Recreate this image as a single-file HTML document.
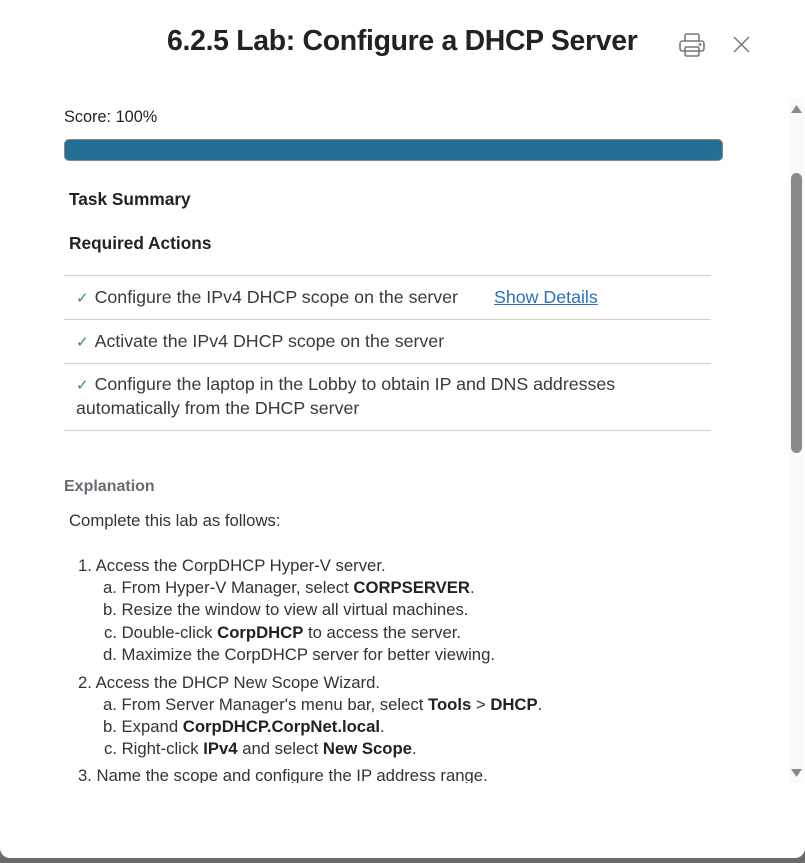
<!DOCTYPE html>
<html><head><meta charset="utf-8"><style>
*{margin:0;padding:0;box-sizing:border-box}
body{width:805px;height:863px;background:#6b6b6b;position:relative;overflow:hidden;font-family:"Liberation Sans",sans-serif;color:#333}
.modal{position:absolute;left:0;top:0;width:805px;height:858px;background:#fff;border-radius:0 0 10px 10px}
.t{position:absolute;white-space:nowrap}
h1{position:absolute;left:167px;top:25px;font-size:28.4px;font-weight:bold;color:#222;white-space:nowrap;letter-spacing:-0.3px}
.bar{position:absolute;left:64px;top:139px;width:659px;height:22px;background:#236f96;border:1px solid #888;border-radius:5px}
.hr{position:absolute;left:64px;width:647px;height:1px;background:#cfcfcf}
.row{font-size:17.8px;color:#3a3a3a}
.ck{color:#2a8a8a;font-size:15px;margin-right:6px}
.b{font-weight:bold;color:#222}
.ex{font-size:16.7px;color:#333}
</style></head><body>
<div class="modal">
<h1>6.2.5 Lab: Configure a DHCP Server</h1>
<svg style="position:absolute;left:678px;top:31px" width="28" height="28" viewBox="0 0 28 28" fill="none" stroke="#777" stroke-width="1.6"><path d="M7 10V5a2 2 0 0 1 2-2h10a2 2 0 0 1 2 2v5"/><rect x="2" y="10" width="24" height="10" rx="2.5"/><rect x="7" y="16" width="14" height="9" rx="1.5"/><circle cx="22" cy="13.5" r="0.6" fill="#777"/></svg>
<svg style="position:absolute;left:733px;top:36px" width="17" height="17" viewBox="0 0 17 17" stroke="#777" stroke-width="1.5"><path d="M1 1L16 16M16 1L1 16"/></svg>
<div class="t" style="left:64px;top:108px;font-size:16.3px;color:#222">Score: 100%</div>
<div class="bar"></div>
<div class="t" style="left:69px;top:189px;font-size:17.3px;font-weight:bold;color:#222">Task Summary</div>
<div class="t" style="left:69px;top:233px;font-size:17.3px;font-weight:bold;color:#222">Required Actions</div>
<div class="hr" style="top:275px"></div>
<div class="t row" style="left:76px;top:287px"><span class="ck">✓</span>Configure the IPv4 DHCP scope on the server</div>
<div class="t row" style="left:494px;top:287px;color:#2a6fc1;text-decoration:underline">Show Details</div>
<div class="hr" style="top:319px"></div>
<div class="t row" style="left:76px;top:331px"><span class="ck">✓</span>Activate the IPv4 DHCP scope on the server</div>
<div class="hr" style="top:363px"></div>
<div class="t row" style="left:76px;top:374px"><span class="ck">✓</span>Configure the laptop in the Lobby to obtain IP and DNS addresses</div>
<div class="t row" style="left:76px;top:398px">automatically from the DHCP server</div>
<div class="hr" style="top:430px"></div>
<div class="t" style="left:64px;top:478px;font-size:16px;font-weight:bold;color:#6a6a72">Explanation</div>
<div style="position:absolute;left:0;top:500px;width:789px;height:283px;overflow:hidden">
<div class="t ex" style="left:69px;top:11px">Complete this lab as follows:</div>
<div class="t ex" style="left:78px;top:56px">1. Access the CorpDHCP Hyper-V server.</div>
<div class="t ex" style="left:103px;top:78px">a. From Hyper-V Manager, select <span class="b">CORPSERVER</span>.</div>
<div class="t ex" style="left:103px;top:100px">b. Resize the window to view all virtual machines.</div>
<div class="t ex" style="left:104px;top:123px">c. Double-click <span class="b">CorpDHCP</span> to access the server.</div>
<div class="t ex" style="left:103px;top:145px">d. Maximize the CorpDHCP server for better viewing.</div>
<div class="t ex" style="left:78px;top:173px">2. Access the DHCP New Scope Wizard.</div>
<div class="t ex" style="left:103px;top:195px">a. From Server Manager's menu bar, select <span class="b">Tools</span> &gt; <span class="b">DHCP</span>.</div>
<div class="t ex" style="left:103px;top:217px">b. Expand <span class="b">CorpDHCP.CorpNet.local</span>.</div>
<div class="t ex" style="left:104px;top:239px">c. Right-click <span class="b">IPv4</span> and select <span class="b">New Scope</span>.</div>
<div class="t ex" style="left:78px;top:266px">3. Name the scope and configure the IP address range.</div>
</div>
<div style="position:absolute;left:789px;top:98px;width:15px;height:685px;background:#fafafa"></div>
<div style="position:absolute;left:791px;top:173px;width:11px;height:280px;background:#8a8a8a;border-radius:6px"></div>
<svg style="position:absolute;left:790px;top:104px" width="13" height="10"><path d="M6.5 1L12 9H1Z" fill="#8a8a8a"/></svg>
<svg style="position:absolute;left:790px;top:768px" width="13" height="10"><path d="M1 1H12L6.5 9Z" fill="#8a8a8a"/></svg>
</div>
</body></html>
